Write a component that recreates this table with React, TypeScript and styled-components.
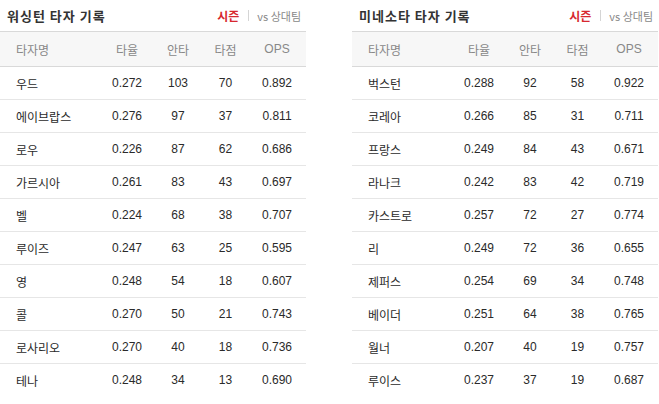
import React from "react";
import styled, { createGlobalStyle } from "styled-components";

const GlobalStyle = createGlobalStyle`
  html, body {
    margin: 0;
    padding: 0;
    background: #fff;
    font-family: "Liberation Sans", "Noto Sans CJK KR", sans-serif;
  }
`;

const Page = styled.div`
  display: flex;
  gap: 46px;
  width: 659px;
`;

const Panel = styled.section`
  width: 306px;
  flex: none;
`;

const TitleBar = styled.div`
  height: 31px;
  display: flex;
  align-items: center;
  justify-content: space-between;
  padding: 0 5px 0 7px;
  box-sizing: border-box;
`;

const Title = styled.h3`
  margin: 0;
  font-size: 13px;
  font-weight: bold;
  color: #333;
  font-family: "Noto Sans CJK KR", sans-serif;
  letter-spacing: 1px;
`;

const Tabs = styled.div`
  display: flex;
  align-items: center;
  font-size: 11px;
  font-family: "Noto Sans CJK KR", sans-serif;
`;

const Tab = styled.span<{ active?: boolean }>`
  color: ${(p) => (p.active ? "#d7282f" : "#888")};
  font-weight: ${(p) => (p.active ? "bold" : "normal")};
  font-size: ${(p) => (p.active ? "12px" : "11px")};
`;

const Divider = styled.span`
  width: 1px;
  height: 11px;
  background: #d5d5d5;
  margin: 0 8px 0 9px;
`;

const Row = styled.div<{ head?: boolean }>`
  display: grid;
  grid-template-columns: 101px 52px 50px 45px 58px;
  align-items: center;
  height: ${(p) => (p.head ? "34px" : "32px")};
  background: ${(p) => (p.head ? "#f7f7f7" : "#fff")};
  border-top: ${(p) => (p.head ? "1px solid #d9d9d9" : "none")};
  border-bottom: 1px solid ${(p) => (p.head ? "#d9d9d9" : "#e6e6e6")};
  font-size: 12px;
  color: ${(p) => (p.head ? "#888" : "#2a2a2a")};

  &:last-child {
    border-bottom: none;
  }
`;

const Cell = styled.div<{ name?: boolean }>`
  text-align: ${(p) => (p.name ? "left" : "center")};
  padding-left: ${(p) => (p.name ? "16px" : "0")};
  font-family: ${(p) =>
    p.name ? `"Noto Sans CJK KR", sans-serif` : `"Liberation Sans", "Noto Sans CJK KR", sans-serif`};
  white-space: nowrap;
`;

type Batter = [string, string, number, number, string];

const teams: { title: string; rows: Batter[] }[] = [
  {
    title: "워싱턴 타자 기록",
    rows: [
      ["우드", "0.272", 103, 70, "0.892"],
      ["에이브랍스", "0.276", 97, 37, "0.811"],
      ["로우", "0.226", 87, 62, "0.686"],
      ["가르시아", "0.261", 83, 43, "0.697"],
      ["벨", "0.224", 68, 38, "0.707"],
      ["루이즈", "0.247", 63, 25, "0.595"],
      ["영", "0.248", 54, 18, "0.607"],
      ["콜", "0.270", 50, 21, "0.743"],
      ["로사리오", "0.270", 40, 18, "0.736"],
      ["테나", "0.248", 34, 13, "0.690"],
    ],
  },
  {
    title: "미네소타 타자 기록",
    rows: [
      ["벅스턴", "0.288", 92, 58, "0.922"],
      ["코레아", "0.266", 85, 31, "0.711"],
      ["프랑스", "0.249", 84, 43, "0.671"],
      ["라나크", "0.242", 83, 42, "0.719"],
      ["카스트로", "0.257", 72, 27, "0.774"],
      ["리", "0.249", 72, 36, "0.655"],
      ["제퍼스", "0.254", 69, 34, "0.748"],
      ["베이더", "0.251", 64, 38, "0.765"],
      ["월너", "0.207", 40, 19, "0.757"],
      ["루이스", "0.237", 37, 19, "0.687"],
    ],
  },
];

const App = () => {
  return (
    <>
      <GlobalStyle />
      <Page>
        {teams.map((team) => (
          <Panel key={team.title}>
            <TitleBar>
              <Title>{team.title}</Title>
              <Tabs>
                <Tab active>시즌</Tab>
                <Divider />
                <Tab>vs 상대팀</Tab>
              </Tabs>
            </TitleBar>
            <Row head>
              <Cell name>타자명</Cell>
              <Cell>타율</Cell>
              <Cell>안타</Cell>
              <Cell>타점</Cell>
              <Cell>OPS</Cell>
            </Row>
            <div>
              {team.rows.map((r) => (
                <Row key={r[0]}>
                  <Cell name>{r[0]}</Cell>
                  <Cell>{r[1]}</Cell>
                  <Cell>{r[2]}</Cell>
                  <Cell>{r[3]}</Cell>
                  <Cell>{r[4]}</Cell>
                </Row>
              ))}
            </div>
          </Panel>
        ))}
      </Page>
    </>
  );
};

export default App;
